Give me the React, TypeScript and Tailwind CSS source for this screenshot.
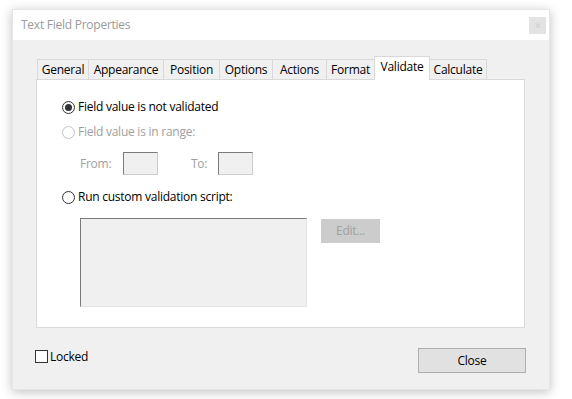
import React from 'react';

const tabs = [
  { label: 'General', w: 'w-[52px]' },
  { label: 'Appearance', w: 'w-[76px]' },
  { label: 'Position', w: 'w-[57px]' },
  { label: 'Options', w: 'w-[54px]' },
  { label: 'Actions', w: 'w-[55px]' },
  { label: 'Format', w: 'w-[49px]' },
  { label: 'Validate', w: 'w-[56px]', active: true },
  { label: 'Calculate', w: 'w-[58px]' },
];

const Radio: React.FC<{ checked?: boolean; disabled?: boolean; label: string }> = ({ checked, disabled, label }) => (
  <div className="flex items-center gap-[3px] h-[16px]">
    <span
      className={`w-[13px] h-[13px] rounded-full border flex items-center justify-center bg-white ${
        disabled ? 'border-[#c4c4c4]' : 'border-[#333333]'
      }`}
    >
      {checked && <span className="w-[7px] h-[7px] rounded-full bg-[#333333]" />}
    </span>
    <span className={disabled ? 'text-[#a0a0a0]' : 'text-black'}>{label}</span>
  </div>
);

export default function App() {
  return (
    <div
      className="w-[572px] h-[399px] bg-white pt-[9px] pl-[12px] text-[12px] leading-none tracking-[-0.25px]"
      style={{ fontFamily: '"Open Sans", "Noto Sans", sans-serif' }}
    >
      <div className="w-[538px] h-[381px] flex flex-col shadow-[0_2px_10px_rgba(0,0,0,0.25)] border border-[#e6e6e6]">
        {/* заголовок */}
        <div className="h-[30px] bg-white flex items-center justify-between pl-[8px] pr-[3px]">
          <span className="text-[#9a9a9a] text-[12px]">Text Field Properties</span>
          <span className="w-[17px] h-[17px] bg-[#e3e3e3] flex items-center justify-center text-[#cfcfcf] text-[9px]">
            ✕
          </span>
        </div>

        <div className="flex-1 bg-[#f0f0f0] flex flex-col px-[23px] pt-[16px]">
          {/* вкладки */}
          <div className="flex items-end pl-[1px] h-[23px]">
            {tabs.map((t, i) =>
              t.active ? (
                <div
                  key={t.label}
                  className={`${t.w} h-[24px] -mb-[1px] -ml-[1px] bg-white border border-b-0 border-[#d9d9d9] flex items-start justify-center pt-[4px] relative z-10`}
                >
                  {t.label}
                </div>
              ) : (
                <div
                  key={t.label}
                  className={`${t.w} h-[20px] bg-[#f0f0f0] border border-[#d9d9d9] border-b-0 ${
                    i === 0 ? '' : '-ml-[1px]'
                  } flex items-center justify-center`}
                >
                  {t.label}
                </div>
              )
            )}
          </div>

          {/* панель */}
          <div className="w-[489px] h-[249px] bg-white border border-[#d9d9d9] pl-[25px] pt-[19px] flex flex-col">
            <Radio checked label="Field value is not validated" />
            <div className="mt-[9px]">
              <Radio disabled label="Field value is in range:" />
            </div>
            <div className="flex items-center mt-[12px] pl-[18px] text-[#a0a0a0]">
              <span className="w-[43px]">From:</span>
              <span className="w-[35px] h-[23px] bg-[#f0f0f0] border border-[#cccccc] border-t-[#7a7a7a] border-l-[#7a7a7a]" />
              <span className="ml-[33px] w-[27px]">To:</span>
              <span className="w-[35px] h-[23px] bg-[#f0f0f0] border border-[#cccccc] border-t-[#7a7a7a] border-l-[#7a7a7a]" />
            </div>
            <div className="mt-[14px]">
              <Radio label="Run custom validation script:" />
            </div>
            <div className="flex items-start mt-[13px] pl-[18px]">
              <div className="w-[227px] h-[89px] bg-[#f0f0f0] border border-[#e3e3e3] border-t-[#7a7a7a] border-l-[#7a7a7a]" />
              <div className="ml-[14px] mt-[1px] w-[59px] h-[24px] bg-[#cccccc] text-[#a0a0a0] flex items-center justify-center">
                Edit...
              </div>
            </div>
          </div>

          {/* низ */}
          <div className="flex items-start justify-between mt-[20px]">
            <div className="flex items-center gap-[2px] mt-[2px] -ml-[1px]">
              <span className="w-[13px] h-[13px] border border-[#333333] bg-white" />
              <span className="text-black">Locked</span>
            </div>
            <div className="w-[108px] h-[25px] bg-[#e1e1e1] border border-[#adadad] flex items-center justify-center text-black">
              Close
            </div>
          </div>
        </div>
      </div>
    </div>
  );
}
